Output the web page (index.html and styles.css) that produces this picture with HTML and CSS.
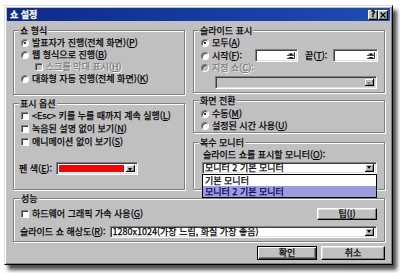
FILE: index.html
```html
<!DOCTYPE html>
<html lang="ko">
<head>
<meta charset="utf-8">
<title>쇼 설정</title>
<link rel="stylesheet" href="styles.css">
</head>
<body>
<div class="dialog">
  <div class="titlebar">
    <span class="title">쇼 설정</span>
    <div class="tbtns">
      <span class="tbtn">?</span>
      <span class="tbtn"><svg width="6" height="6" viewBox="0 0 6 6"><path d="M0.5 0.5L5.5 5.5M5.5 0.5L0.5 5.5" stroke="#000" stroke-width="1.4"/></svg></span>
    </div>
  </div>
  <div class="content">
    <div class="cols">
      <div class="col col-left">
        <fieldset class="group g-format">
          <legend>쇼 형식</legend>
          <div class="opt"><span class="radio on"></span><span>발표자가 진행(전체 화면)(<u>P</u>)</span></div>
          <div class="opt"><span class="radio"></span><span>웹 형식으로 진행(<u>B</u>)</span></div>
          <div class="opt sub disabled"><span class="check dis"></span><span>스크롤 막대 표시(<u>H</u>)</span></div>
          <div class="opt"><span class="radio"></span><span>대화형 자동 진행(전체 화면)(<u>K</u>)</span></div>
        </fieldset>
        <fieldset class="group g-opts">
          <legend>표시 옵션</legend>
          <div class="opt"><span class="check"></span><span>&lt;Esc&gt; 키를 누를 때까지 계속 실행(<u>L</u>)</span></div>
          <div class="opt"><span class="check"></span><span>녹음된 설명 없이 보기(<u>N</u>)</span></div>
          <div class="opt"><span class="check"></span><span>애니메이션 없이 보기(<u>S</u>)</span></div>
          <div class="pen-row">
            <span>펜 색(<u>E</u>):</span>
            <div class="combo pen-combo"><span class="swatch"></span><span class="arrow"></span></div>
          </div>
        </fieldset>
      </div>
      <div class="col col-right">
        <fieldset class="group g-slide">
          <legend>슬라이드 표시</legend>
          <div class="opt"><span class="radio on"></span><span>모두(<u>A</u>)</span></div>
          <div class="start-row">
            <div class="opt start-opt"><span class="radio"></span><span>시작(<u>F</u>):</span></div>
            <div class="spin spin1"><span class="field"></span><span class="spinbtns"><span class="sbtn up"></span><span class="sbtn down"></span></span></div>
            <span class="end-label">끝(<u>T</u>):</span>
            <div class="spin spin2"><span class="field"></span><span class="spinbtns"><span class="sbtn up"></span><span class="sbtn down"></span></span></div>
          </div>
          <div class="opt disabled"><span class="radio dis"></span><span>지정 쇼(<u>C</u>):</span></div>
          <div class="combo dis custom-combo"><span class="val"></span><span class="arrow dis"></span></div>
        </fieldset>
        <fieldset class="group g-trans">
          <legend>화면 전환</legend>
          <div class="opt"><span class="radio on"></span><span>수동(<u>M</u>)</span></div>
          <div class="opt"><span class="radio"></span><span>설정된 시간 사용(<u>U</u>)</span></div>
        </fieldset>
        <fieldset class="group g-mon">
          <legend>복수 모니터</legend>
          <div class="mon-label">슬라이드 쇼를 표시할 모니터(<u>O</u>):</div>
          <div class="mon-wrap">
            <div class="combo mon-combo"><span class="val">모니터 2 기본 모니터</span><span class="arrow"></span></div>
            <div class="droplist">
              <div class="item">기본 모니터</div>
              <div class="item sel">모니터 2 기본 모니터</div>
            </div>
          </div>
        </fieldset>
      </div>
    </div>
    <fieldset class="group g-perf">
      <legend>성능</legend>
      <div class="perf-row">
        <div class="opt"><span class="check"></span><span>하드웨어 그래픽 가속 사용(<u>G</u>)</span></div>
        <span class="btn tip">팁(<u>I</u>)</span>
      </div>
      <div class="perf-row res-row">
        <span>슬라이드 쇼 해상도(<u>R</u>):</span>
        <div class="combo res-combo"><span class="val">1280x1024(가장 느림, 화질 가장 좋음)</span><span class="arrow"></span></div>
      </div>
    </fieldset>
    <div class="actions">
      <span class="btn btn-default ok">확인</span>
      <span class="btn cancel">취소</span>
    </div>
  </div>
</div>
</body>
</html>
```
FILE: styles.css
```css
* { box-sizing: border-box; }
html, body { margin: 0; padding: 0; }
body {
  background: #fff;
  font-family: "Noto Sans CJK KR", "Noto Sans", sans-serif;
  font-size: 9px;
  line-height: 12px;
  color: #000;
  -webkit-text-stroke-width: 0.25px;
  width: 400px;
  height: 273px;
  overflow: hidden;
}
u { text-decoration: underline; text-underline-offset: 1px; }

.dialog {
  margin: 5px 0 0 4px;
  width: 389px;
  height: 260px;
  background: #c0c0c0;
  border: 1px solid;
  border-color: #dfdfdf #000 #000 #dfdfdf;
  box-shadow: inset 1px 1px #fff, inset -1px -1px #808080, 4px 5px 4px rgba(0,0,0,.7);
  padding: 2px;
  display: flex;
  flex-direction: column;
}

.titlebar {
  height: 13px;
  flex: none;
  display: flex;
  align-items: center;
  justify-content: space-between;
  padding: 0 2px 0 3px;
  background: linear-gradient(90deg, #0c2a8a, #1f4cb6);
}
.title { color: #fff; font-weight: bold; font-size: 9px; line-height: 12px; }
.tbtns { display: flex; }
.tbtn {
  width: 10px; height: 10px;
  background: #c0c0c0;
  border: 1px solid;
  border-color: #fff #000 #000 #fff;
  box-shadow: inset -1px -1px #808080;
  display: flex; align-items: center; justify-content: center;
  font-weight: bold; font-size: 8px; line-height: 8px;
  font-family: "DejaVu Sans", sans-serif;
}

.content {
  flex: 1;
  padding: 4px 5px 0 6px;
  display: flex;
  flex-direction: column;
}
.cols { display: flex; gap: 8px; }
.col-left { width: 172px; display: flex; flex-direction: column; gap: 3px; }
.col-right { width: 192px; display: flex; flex-direction: column; }

.group {
  margin: 0;
  padding: 0 6px 0 5px;
  border: 1px solid #808080;
  box-shadow: inset 1px 1px #fff, 1px 1px #fff;
  min-width: 0;
}
.group legend {
  padding: 0 1px;
  line-height: 11px;
  background: #c0c0c0;
}
.g-format { height: 70px; padding-top: 1px; }
.g-opts { height: 92px; }
.g-slide { height: 68px; padding-top: 1px; }
.g-trans { height: 38px; margin-top: 2px; padding-top: 2px; }
.g-mon { height: 53px; margin-top: 4px; padding-top: 1px; }
.g-perf { height: 49px; margin-top: 3px; padding-top: 4px; padding-right: 7px; padding-left: 6px; }

.opt {
  display: flex; align-items: center; gap: 3px;
  height: 12px; padding-left: 2px; white-space: nowrap;
}
.g-opts .opt { height: 13px; }
.sub { padding-left: 16px; }
.disabled { color: #808080; text-shadow: 1px 1px 0 #fff; }

.radio {
  width: 8px; height: 8px; flex: none;
  border-radius: 50%;
  background: #fff;
  border: 1px solid;
  border-color: #808080 #fff #fff #808080;
  box-shadow: inset 1px 1px #404040;
  position: relative;
}
.radio.dis { background: #c0c0c0; }
.radio.on::after {
  content: ""; position: absolute;
  left: 2px; top: 2px; width: 2px; height: 2px;
  background: #000; border-radius: 50%;
}
.check {
  width: 8px; height: 8px; flex: none;
  background: #fff;
  border: 1px solid;
  border-color: #808080 #fff #fff #808080;
  box-shadow: inset 1px 1px #404040;
}
.check.dis { background: #c0c0c0; }

.combo {
  display: flex; align-items: stretch;
  background: #fff;
  border: 1px solid;
  border-color: #808080 #fff #fff #808080;
  box-shadow: inset 1px 1px #404040, inset -1px -1px #dfdfdf;
  padding: 2px;
  height: 13px;
}
.combo.dis { background: #c0c0c0; }
.combo .val {
  flex: 1; display: flex; align-items: center;
  line-height: 10px; padding-left: 1px;
  overflow: visible; white-space: nowrap;
}
.arrow {
  width: 9px; flex: none;
  background: #c0c0c0;
  box-shadow: inset -1px -1px #000, inset 1px 1px #fff, inset -2px -2px #808080;
  position: relative;
}
.arrow::after {
  content: ""; position: absolute;
  left: 2px; top: 3px;
  border-left: 2px solid transparent;
  border-right: 2px solid transparent;
  border-top: 3px solid #000;
}
.mon-combo .arrow::after, .res-combo .arrow::after { top: 2px; }
.arrow.dis::after { border-top-color: #808080; }

.pen-row { display: flex; align-items: center; gap: 4px; height: 13px; margin-top: 14px; }
.pen-combo { width: 82px; }
.swatch { flex: 1; background: #f00; margin: 0 2px 0 0; }

.start-row { display: flex; align-items: center; height: 13px; }
.start-opt { width: 56px; }
.spin {
  display: flex; align-items: stretch;
  background: #fff;
  border: 1px solid;
  border-color: #808080 #fff #fff #808080;
  box-shadow: inset 1px 1px #404040, inset -1px -1px #dfdfdf;
  padding: 2px;
  height: 13px;
}
.spin .field { flex: 1; }
.spin1 { width: 43px; }
.spin2 { width: 45px; }
.end-label { margin-left: 7px; width: 28px; white-space: nowrap; }
.spinbtns { width: 8px; display: flex; flex-direction: column; }
.sbtn {
  flex: 1; background: #c0c0c0; position: relative;
  box-shadow: inset -1px -1px #404040, inset 1px 1px #fff;
}
.sbtn::after {
  content: ""; position: absolute; left: 2px; top: 1px;
  border-left: 2px solid transparent; border-right: 2px solid transparent;
}
.sbtn.up::after { border-bottom: 2px solid #000; }
.sbtn.down::after { border-top: 2px solid #000; }
.custom-combo { margin: 2px 0 0 16px; width: 162px; }

.mon-label { padding-left: 4px; line-height: 11px; white-space: nowrap; }
.mon-wrap { position: relative; margin: 2px 0 0 3px; width: 175px; }
.mon-combo { height: 12px; padding: 1px 2px 1px 1px; }
.droplist {
  position: absolute; left: 0; right: 0; top: 100%;
  background: #fff; border: 1px solid #000;
  z-index: 2;
}
.droplist .item { height: 11px; line-height: 11px; padding-left: 2px; white-space: nowrap; }
.droplist .item.sel { background: #9c9ce0; color: #000060; }

.perf-row { display: flex; align-items: center; height: 12px; }
.perf-row .opt { padding-left: 1px; }
.res-row { margin-top: 6px; gap: 4px; white-space: nowrap; }
.res-combo { flex: 1; height: 12px; padding: 1px 2px 1px 1px; }

.btn {
  display: flex; align-items: center; justify-content: center;
  background: #c0c0c0;
  border: 1px solid;
  border-color: #fff #000 #000 #fff;
  box-shadow: inset -1px -1px #808080, inset 1px 1px #dfdfdf;
  height: 14px;
  white-space: nowrap;
}
.tip { margin-left: auto; width: 60px; height: 12px; }
.actions { display: flex; justify-content: flex-end; gap: 4px; margin-top: 4px; }
.ok { width: 60px; }
.cancel { width: 64px; }
.btn-default {
  border: 1px solid #000;
  box-shadow: inset 1px 1px #fff, inset -1px -1px #404040, inset -2px -2px #808080;
}
```
